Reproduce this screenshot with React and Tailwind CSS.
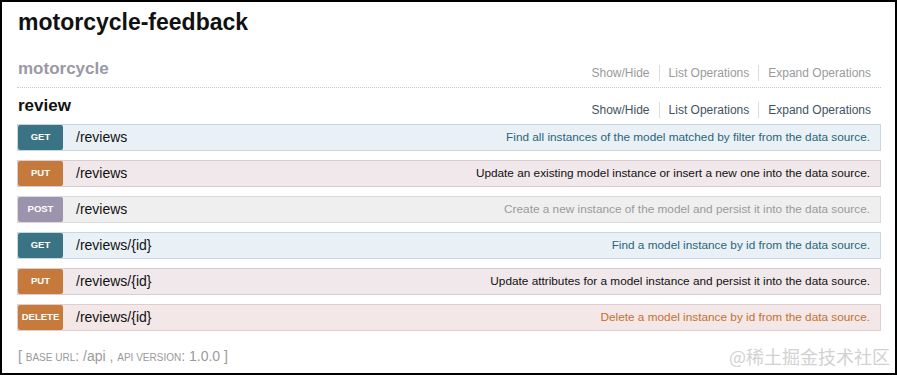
const ops = [
  {
    method: 'GET',
    path: '/reviews',
    summary: 'Find all instances of the model matched by filter from the data source.',
    row: 'bg-[#e9f1f7] border-[#c6d7e4]',
    badge: 'bg-[#3a7384]',
    text: 'text-[#2c6479]'
  },
  {
    method: 'PUT',
    path: '/reviews',
    summary: 'Update an existing model instance or insert a new one into the data source.',
    row: 'bg-[#f0e8eb] border-[#d9cdd2]',
    badge: 'bg-[#c57a3c]',
    text: 'text-[#111111]'
  },
  {
    method: 'POST',
    path: '/reviews',
    summary: 'Create a new instance of the model and persist it into the data source.',
    row: 'bg-[#efefef] border-[#dadada]',
    badge: 'bg-[#9b94ac]',
    text: 'text-[#9a9a9a]'
  },
  {
    method: 'GET',
    path: '/reviews/{id}',
    summary: 'Find a model instance by id from the data source.',
    row: 'bg-[#e9f1f7] border-[#c6d7e4]',
    badge: 'bg-[#3a7384]',
    text: 'text-[#2c6479]'
  },
  {
    method: 'PUT',
    path: '/reviews/{id}',
    summary: 'Update attributes for a model instance and persist it into the data source.',
    row: 'bg-[#f0e8eb] border-[#d9cdd2]',
    badge: 'bg-[#c57a3c]',
    text: 'text-[#111111]'
  },
  {
    method: 'DELETE',
    path: '/reviews/{id}',
    summary: 'Delete a model instance by id from the data source.',
    row: 'bg-[#f3e7e8] border-[#dfcdcf]',
    badge: 'bg-[#c67b3d]',
    text: 'text-[#c4722e]'
  }
];

function Options({ muted }) {
  const color = muted ? 'text-[#9a9a9a]' : 'text-[#3f5361]';
  return (
    <ul className={`flex items-center text-[12px] leading-[16px] pr-[10px] ${color}`}>
      <li className="pr-[9px] border-r border-[#dddddd]">Show/Hide</li>
      <li className="px-[9px] border-r border-[#dddddd]">List Operations</li>
      <li className="pl-[9px]">Expand Operations</li>
    </ul>
  );
}

function Operation({ op }) {
  return (
    <div className={`flex items-center h-[27px] border ${op.row}`}>
      <div
        className={`flex items-center justify-center w-[45px] h-full rounded-[2px] text-white font-bold text-[9.5px] uppercase ${op.badge}`}
      >
        {op.method}
      </div>
      <div className="pl-[13px] text-[14px] text-[#111111]">{op.path}</div>
      <div className={`ml-auto pr-[10px] text-[11.8px] ${op.text}`}>{op.summary}</div>
    </div>
  );
}

export default function App() {
  return (
    <div className="relative w-[897px] h-[375px] overflow-hidden border-2 border-black bg-white pt-[6px] pl-[15px] pr-[14px] font-['Liberation_Sans',Arial,sans-serif]">
      <h1 className="text-[23px] leading-[28px] font-bold text-[#111111] pl-[1px]">motorcycle-feedback</h1>

      {/* collapsed resource */}
      <div className="mt-[23px] flex items-end justify-between pb-[6px] border-b border-dotted border-[#c8c8c8]">
        <h2 className="mb-[2px] pl-[1px] text-[17px] leading-[20px] font-bold text-[#9a98a6]">motorcycle</h2>
        <Options muted />
      </div>

      {/* expanded resource */}
      <div className="pt-[8px] flex items-end justify-between">
        <h2 className="mb-[2px] pl-[1px] text-[17px] leading-[20px] font-bold text-[#111111]">review</h2>
        <Options />
      </div>

      <div className="mt-[6px] flex flex-col gap-[9px]">
        {ops.map((op, i) => (
          <Operation key={i} op={op} />
        ))}
      </div>

      <div className="mt-[15px] pl-[1px] text-[14px] leading-[20px] text-[#9a9a9a]">
        [ <span className="text-[10px]">BASE URL</span>: /api , <span className="text-[10px]">API VERSION</span>: 1.0.0 ]
      </div>

      <div className="absolute right-[5px] bottom-[6px] text-[18px] leading-[22px] text-[#d2d2d2] font-['Noto_Sans_CJK_SC',sans-serif]">
        @稀土掘金技术社区
      </div>
    </div>
  );
}
